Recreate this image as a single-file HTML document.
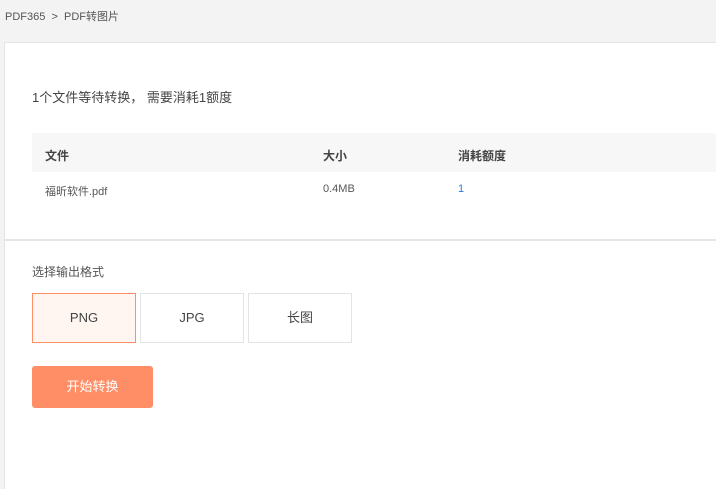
<!DOCTYPE html>
<html style="width:716px;height:489px;overflow:hidden"><head><meta charset="utf-8"><style>
*{margin:0;padding:0;box-sizing:border-box}
body{width:716px;height:489px;background:#f3f3f3;font-family:"Liberation Sans","Noto Sans CJK SC",sans-serif;color:#333;position:relative;overflow:hidden}
.a{position:absolute}
.crumb{left:5px;top:8px;font-size:11px;color:#555}
.panel{left:4px;top:42px;width:712px;height:447px;background:#fff;border:1px solid #e4e4e4;border-right:none;border-bottom:none}
.sep{left:5px;top:239px;width:711px;height:2px;background:#e6e6e6}
.th{left:32px;top:133px;width:684px;height:39px;background:#f7f7f7}
.b{font-weight:bold;font-size:12px;color:#444;top:147px}
.c{font-size:11px;color:#555;top:183px}
.opt{top:293px;width:104px;height:50px;border:1px solid #e3e3e3;font-size:13px;color:#444;text-align:center;line-height:48px}
.btn{left:32px;top:366px;width:121px;height:42px;background:#ff8e66;border-radius:3px;color:#fff;font-size:13px;text-align:center;line-height:42px}
</style></head><body>
<div class="a crumb">PDF365 &nbsp;&gt;&nbsp; PDF转图片</div>
<div class="a panel"></div>
<div class="a" style="left:32px;top:87px;font-size:13px;color:#444">1个文件等待转换， 需要消耗1额度</div>
<div class="a th"></div>
<div class="a b" style="left:45px">文件</div>
<div class="a b" style="left:323px">大小</div>
<div class="a b" style="left:458px">消耗额度</div>
<div class="a c" style="left:45px">福昕软件.pdf</div>
<div class="a c" style="left:323px">0.4MB</div>
<div class="a c" style="left:458px;color:#2a7fd0">1</div>
<div class="a sep"></div>
<div class="a" style="left:32px;top:263px;font-size:12px;color:#555">选择输出格式</div>
<div class="a opt" style="left:32px;border-color:#ff8e66;background:#fff6f2">PNG</div>
<div class="a opt" style="left:140px">JPG</div>
<div class="a opt" style="left:248px">长图</div>
<div class="a btn">开始转换</div>
</body></html>
